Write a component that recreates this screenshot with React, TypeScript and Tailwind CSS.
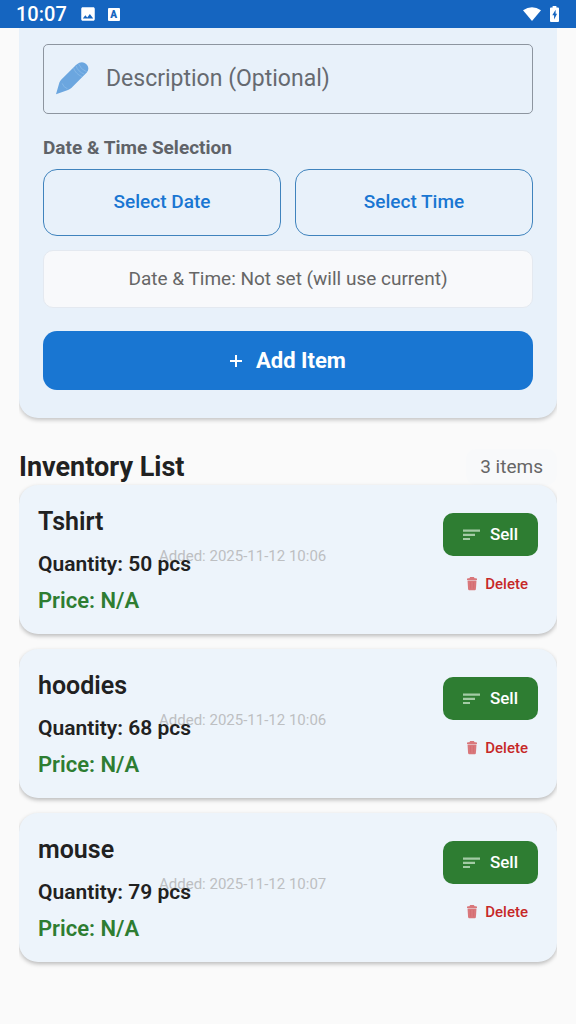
import { MdImage } from 'react-icons/md';

type Item = {
  name: string;
  quantity: number;
  price: string;
  added: string;
};

const items: Item[] = [
  { name: 'Tshirt', quantity: 50, price: 'N/A', added: '2025-11-12 10:06' },
  { name: 'hoodies', quantity: 68, price: 'N/A', added: '2025-11-12 10:06' },
  { name: 'mouse', quantity: 79, price: 'N/A', added: '2025-11-12 10:07' },
];

const PencilIcon = () => (
  <svg viewBox="0 0 34 34" className="size-[34px] shrink-0" aria-hidden="true">
    <path
      d="M1 32.2 L4.4 20.5 Q5 19 6.4 17.4 L21.6 2.4 Q27-1.8 31.2 2 Q35.2 6 31.8 10.4 L16.6 25.8 Q15 27.4 13 28 Z"
      fill="#6ba6df"
    />
    <path
      d="M7.2 21.4 Q8.6 25.6 12.6 26.8 M18.6 6.2 Q20.6 12 27 14.6 M21 3.8 Q23 9.8 29.4 12.2 M23.6 1.8 Q25.6 7.4 31.6 9.8"
      fill="none"
      stroke="#86b8e7"
      strokeWidth=".9"
    />
  </svg>
);

const SortIcon = () => (
  <svg viewBox="0 0 17 12" className="h-3 w-[17px]" aria-hidden="true">
    <path d="M0 .5h17v2.2H0z M0 4.7h12v2.2H0z M0 8.900h7v2.200H0z" fill="#a3cba5" />
  </svg>
);

const TrashIcon = () => (
  <svg viewBox="0 0 10 14" className="h-[14px] w-[10px]" aria-hidden="true">
    <path d="M3.2 0h3.6l.9 1.2H9q1 0 1 .9v.8H0v-.8q0-.9 1-.9h1.3z" fill="#d9777b" />
    <path d="M.5 3.4h9l-.6 8.600q-.1 1.200-1.200 1.200H2.300q-1.100 0-1.200-1.200z" fill="#d9777b" />
    <path d="M3.500 5v6.500 M6.500 5v6.500" stroke="#d2686e" strokeWidth=".6" />
  </svg>
);

const StatusBar = () => (
  <header className="relative z-10 flex h-7 items-center bg-[#1565c0] px-4 text-white">
    <span className="text-xl leading-7 font-medium">10:07</span>
    <MdImage className="ml-3 size-[18px]" aria-hidden="true" />
    <span className="ml-[11px] flex h-[13px] w-3 justify-center rounded-[1px] bg-white text-[10px] leading-[13px] font-black text-[#1565c0]">
      A
    </span>
    <svg viewBox="0 0 18 14" className="ml-auto h-[14px] w-[18px]" aria-hidden="true">
      <path d="M9 14 L0 3.2 Q9-2.6 18 3.2z" fill="#fff" />
    </svg>
    <svg viewBox="0 0 9 16" className="mr-px ml-[9px] h-4 w-[9px]" aria-hidden="true">
      <path d="M2.6 0h3.8v1.6H8q1 0 1 1V15q0 1-1 1H1q-1 0-1-1V2.6q0-1 1-1h1.6z" fill="#fff" />
      <path d="M5.6 3.8 L2.3 9.2h1.8v4.2l3-5.6H5.6z" fill="#1565c0" />
    </svg>
  </header>
);

const ItemForm = () => (
  <form
    className="rounded-b-[19px] bg-[#e8f1fa] px-6 pt-4 pb-7 shadow-[0_2px_4px_rgba(0,0,0,0.22)]"
    onSubmit={(e) => e.preventDefault()}
  >
    <label className="flex h-[70px] items-center gap-[17px] rounded-[5px] border border-[#8d959f] px-[11px]">
      <PencilIcon />
      <input
        type="text"
        aria-label="Description (Optional)"
        placeholder="Description (Optional)"
        className="min-w-0 flex-1 bg-transparent text-[23px] text-[#666a70] outline-none placeholder:text-[#666a70] placeholder:opacity-100"
      />
    </label>

    <h2 className="mt-5 text-[19px] leading-[27px] font-bold text-[#5f6368]">Date &amp; Time Selection</h2>
    <div className="mt-2 grid grid-cols-2 gap-[14px]">
      <button
        type="button"
        className="h-[67px] rounded-[14px] border border-[#3f83bd] text-[19px] font-medium text-[#1976d2]"
      >
        Select Date
      </button>
      <button
        type="button"
        className="h-[67px] rounded-[14px] border border-[#3f83bd] text-[19px] font-medium text-[#1976d2]"
      >
        Select Time
      </button>
    </div>

    <p className="mt-[14px] rounded-[10px] border border-[#e4e9f0] bg-[#f8f9fb] py-[14px] text-center text-[19px] leading-7 text-[#666]">
      Date &amp; Time: Not set (will use current)
    </p>

    <button
      type="submit"
      className="mt-[23px] flex h-[59px] w-full items-center justify-center gap-[14px] rounded-[14px] bg-[#1976d2] text-[22px] font-bold text-white"
    >
      <svg viewBox="0 0 12 12" className="size-3" aria-hidden="true">
        <path d="M6 0v12M0 6h12" stroke="#fff" strokeWidth="2" />
      </svg>
      Add Item
    </button>
  </form>
);

const ItemCard = ({ item }: { item: Item }) => (
  <li className="relative flex justify-between rounded-[19px] bg-[#edf4fb] px-[19px] pt-[21px] pb-[14px] shadow-[0_2px_4px_rgba(0,0,0,0.26)]">
    <p className="absolute top-[59px] left-[140px] text-[15px] leading-6 text-[#bdbfc2]">Added: {item.added}</p>
    <div className="relative">
      <h3 className="text-[25px] leading-8 font-semibold text-[#212121]">{item.name}</h3>
      <p className="mt-2 text-[21px] leading-9 font-semibold text-[#212121]">Quantity: {item.quantity} pcs</p>
      <p className="text-[22px] leading-[38px] font-semibold text-[#2e7d32]">Price: {item.price}</p>
    </div>
    <div className="flex flex-col items-end pt-[7px]">
      <button
        type="button"
        className="flex h-[43px] w-[95px] items-center justify-center gap-[10px] rounded-[10px] bg-[#2e7d32] text-[17px] font-medium text-white"
      >
        <SortIcon />
        Sell
      </button>
      <button
        type="button"
        className="mt-3 flex items-center gap-2 pr-[10px] text-[15px] leading-8 font-medium text-[#c62828]"
      >
        <TrashIcon />
        Delete
      </button>
    </div>
  </li>
);

export default function App() {
  return (
    <div className="min-h-screen bg-[#fafafa] font-['Roboto',sans-serif]">
      <StatusBar />
      <main className="mx-[19px] overflow-x-clip pb-[62px]">
        <ItemForm />
        <div className="mt-[31px] flex items-center justify-between">
          <h2 className="text-[27px] leading-9 font-bold text-[#212121]">Inventory List</h2>
          <span className="rounded-[10px] bg-[#f8f9fa] px-[14px] text-[19px] leading-9 text-[#666]">
            {items.length} items
          </span>
        </div>
        <ul className="flex flex-col gap-[15px]">
          {items.map((item) => (
            <ItemCard key={item.name} item={item} />
          ))}
        </ul>
      </main>
    </div>
  );
}
